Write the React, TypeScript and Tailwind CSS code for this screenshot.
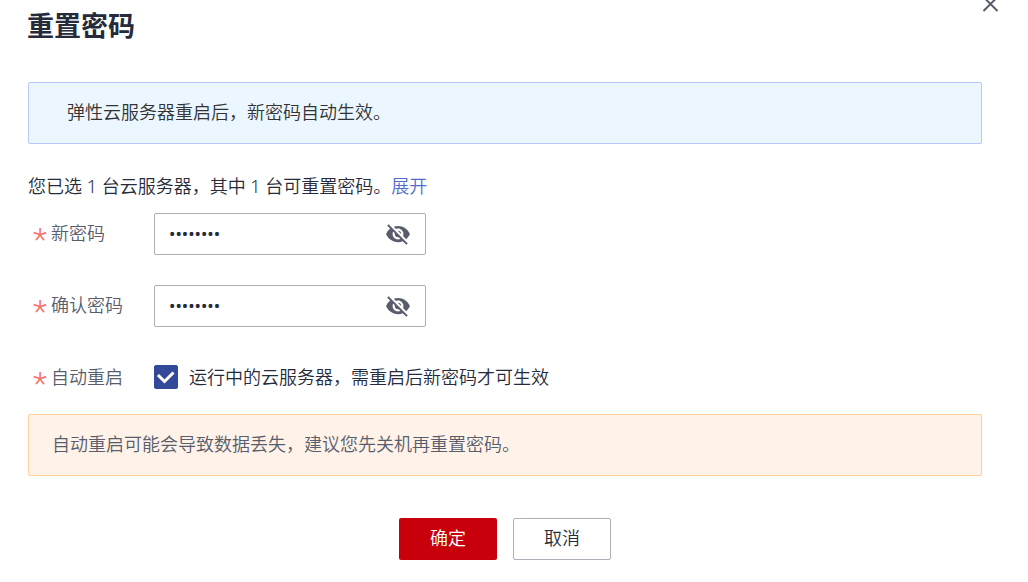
import { useState } from 'react';
import { MdVisibility, MdVisibilityOff } from 'react-icons/md';

type PasswordFieldProps = {
  id: string;
  label: string;
  value: string;
  onChange: (value: string) => void;
};

function FieldLabel({ htmlFor, children }: { htmlFor: string; children: string }) {
  return (
    <label htmlFor={htmlFor} className="flex w-[126px] shrink-0 items-center gap-1 pb-0.5 pl-[5px] text-[#575d6c]">
      <span
        aria-hidden="true"
        className="h-[18px] w-[14px] text-center font-[Roboto] text-[32px] leading-[30px] text-[#f66f6a]"
      >
        *
      </span>
      {children}
    </label>
  );
}

function PasswordField({ id, label, value, onChange }: PasswordFieldProps) {
  const [visible, setVisible] = useState(false);

  return (
    <div className="flex h-10 items-center">
      <FieldLabel htmlFor={id}>{label}</FieldLabel>
      <div className="flex h-[42px] w-[272px] items-center rounded-[2px] border border-[#adb0b8] px-[14px]">
        <input
          id={id}
          type={visible ? 'text' : 'password'}
          value={value}
          onChange={(e) => onChange(e.target.value)}
          className="h-full min-w-0 flex-1 bg-transparent pb-0.5 text-[17px] font-normal text-[#252b3a] outline-none"
        />
        <button
          type="button"
          aria-label={visible ? '隐藏密码' : '显示密码'}
          onClick={() => setVisible(!visible)}
          className="text-[#575d6c]"
        >
          {visible ? <MdVisibility size={26} /> : <MdVisibilityOff size={26} />}
        </button>
      </div>
    </div>
  );
}

export default function App() {
  const [password, setPassword] = useState('Abcd@123');
  const [confirm, setConfirm] = useState('Abcd@123');
  const [autoRestart, setAutoRestart] = useState(true);

  return (
    <div
      lang="zh-CN"
      className="bg-white pb-5 font-['Noto_Sans','Noto_Sans_CJK_SC',sans-serif] text-[18px] leading-[26px] font-[350] text-[#252b3a]"
    >
      <header className="flex items-start justify-between pr-[29px] pl-[27px]">
        <h1 className="text-[27px] leading-[52px] font-bold">重置密码</h1>
        <button type="button" aria-label="关闭" className="-mt-1 text-[#575d6c]">
          <svg viewBox="0 0 16 16" className="size-4" fill="none" stroke="currentColor" strokeWidth="2">
            <path d="M.5 1 14.5 15M14.5 1 .5 15" />
          </svg>
        </button>
      </header>

      <form className="mt-[30px] mr-[46px] ml-7" onSubmit={(e) => e.preventDefault()}>
        <div className="rounded-[2px] border border-[#b8c8fa] bg-[#ebf6ff] px-[38px] pt-4 pb-[18px] text-[#333333]">
          弹性云服务器重启后，新密码自动生效。
        </div>

        <p className="mt-[29px]">
          您已选 1 台云服务器，其中 1 台可重置密码。
          <a href="#servers" className="text-[#526ecc]">展开</a>
        </p>

        <div className="mt-[15px] flex flex-col gap-8">
          <PasswordField id="password" label="新密码" value={password} onChange={setPassword} />
          <PasswordField id="confirm" label="确认密码" value={confirm} onChange={setConfirm} />
          <div className="flex h-10 items-center">
            <FieldLabel htmlFor="auto-restart">自动重启</FieldLabel>
            <label className="flex items-center gap-[11px] pb-0.5">
              <span className="grid size-6">
                <input
                  id="auto-restart"
                  type="checkbox"
                  checked={autoRestart}
                  onChange={(e) => setAutoRestart(e.target.checked)}
                  className="peer col-start-1 row-start-1 size-6 appearance-none rounded-[2px] border border-[#adb0b8] checked:border-[#344899] checked:bg-[#344899]"
                />
                <svg
                  viewBox="0 0 24 24"
                  className="pointer-events-none invisible col-start-1 row-start-1 size-6 text-white peer-checked:visible"
                  fill="none"
                  stroke="currentColor"
                  strokeWidth="3"
                >
                  <path d="M4 10 10.5 16.5 19.5 7.5" />
                </svg>
              </span>
              运行中的云服务器，需重启后新密码才可生效
            </label>
          </div>
        </div>

        <div className="mt-4 rounded-[2px] border border-[#ffcf9e] bg-[#fff2e8] px-[23px] pt-4 pb-[18px] text-[#575d6c]">
          自动重启可能会导致数据丢失，建议您先关机再重置密码。
        </div>

        <div className="mt-[42px] flex justify-center gap-4">
          <button type="submit" className="h-[42px] w-[98px] rounded-[2px] bg-[#c7000b] pb-0.5 text-white">
            确定
          </button>
          <button type="button" className="h-[42px] w-[98px] rounded-[2px] border border-[#adb0b8] pb-0.5">
            取消
          </button>
        </div>
      </form>
    </div>
  );
}
